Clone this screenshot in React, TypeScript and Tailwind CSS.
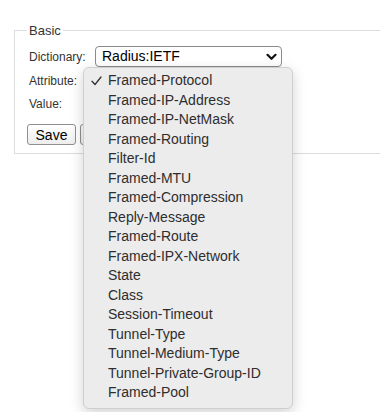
import React from 'react';

const OPTIONS = [
  'Framed-Protocol',
  'Framed-IP-Address',
  'Framed-IP-NetMask',
  'Framed-Routing',
  'Filter-Id',
  'Framed-MTU',
  'Framed-Compression',
  'Reply-Message',
  'Framed-Route',
  'Framed-IPX-Network',
  'State',
  'Class',
  'Session-Timeout',
  'Tunnel-Type',
  'Tunnel-Medium-Type',
  'Tunnel-Private-Group-ID',
  'Framed-Pool',
];

const App: React.FC = () => {
  return (
    <div
      className="relative w-[380px] h-[412px] overflow-hidden bg-white"
      style={{ fontFamily: '"Liberation Sans", Arial, sans-serif' }}
    >
      <fieldset className="ml-[14px] mt-[23px] w-[400px] border border-[#dcdcdc] px-[12px] pb-[8px]">
        <legend className="px-[2px] text-[13px] leading-[15px] text-[#333]">Basic</legend>

        <div className="mt-[8px] flex h-[21px] items-center">
          <span className="w-[68px] pl-[2px] text-[12px] text-[#333]">Dictionary:</span>
          <div className="flex h-[21px] w-[187px] items-center justify-between rounded-[4px] border border-[#8a8a8a] bg-white pl-[6px] pr-[4px]">
            <span className="text-[14px] text-black">Radius:IETF</span>
            <svg width="11" height="8" viewBox="0 0 11 8">
              <path d="M1.5 1.8 L5.5 5.8 L9.5 1.8" fill="none" stroke="#111" strokeWidth="2.2" strokeLinecap="round" strokeLinejoin="round" />
            </svg>
          </div>
        </div>

        <div className="mt-[3px] flex h-[21px] items-center">
          <span className="w-[68px] pl-[2px] text-[12px] text-[#333]">Attribute:</span>
        </div>

        <div className="mt-[2px] flex h-[21px] items-center">
          <span className="w-[68px] pl-[2px] text-[12px] text-[#333]">Value:</span>
        </div>

        <div className="mt-[10px] flex h-[21px] items-center gap-[4px]">
          <button className="h-[21px] w-[49px] rounded-[3px] border border-[#8f8f8f] bg-gradient-to-b from-white to-[#ededed] text-[14px] text-black">
            Save
          </button>
          {/* second button sits under the open menu, only its left edge shows */}
          <button aria-label="Cancel" className="h-[21px] w-[56px] rounded-[3px] border border-[#8f8f8f] bg-gradient-to-b from-white to-[#ededed]" />
        </div>
      </fieldset>

      <div className="absolute left-[83px] top-[67px] z-10 w-[210px] rounded-[6px] border border-[#cfcfcf] bg-[#ececec] pb-[5px] pt-[3px] shadow-[0_4px_14px_rgba(0,0,0,0.18)]">
        {OPTIONS.map((opt, i) => (
          <div key={opt} className="relative flex h-[19.5px] items-center pl-[24px] text-[14px] text-[#2e2e2e]">
            {i === 0 && (
              <svg className="absolute left-[7px] top-[5px]" width="11" height="10" viewBox="0 0 11 10">
                <path d="M1 5.2 L4 8.5 L10 1" fill="none" stroke="#333" strokeWidth="1.3" strokeLinecap="round" strokeLinejoin="round" />
              </svg>
            )}
            {opt}
          </div>
        ))}
      </div>
    </div>
  );
};

export default App;
